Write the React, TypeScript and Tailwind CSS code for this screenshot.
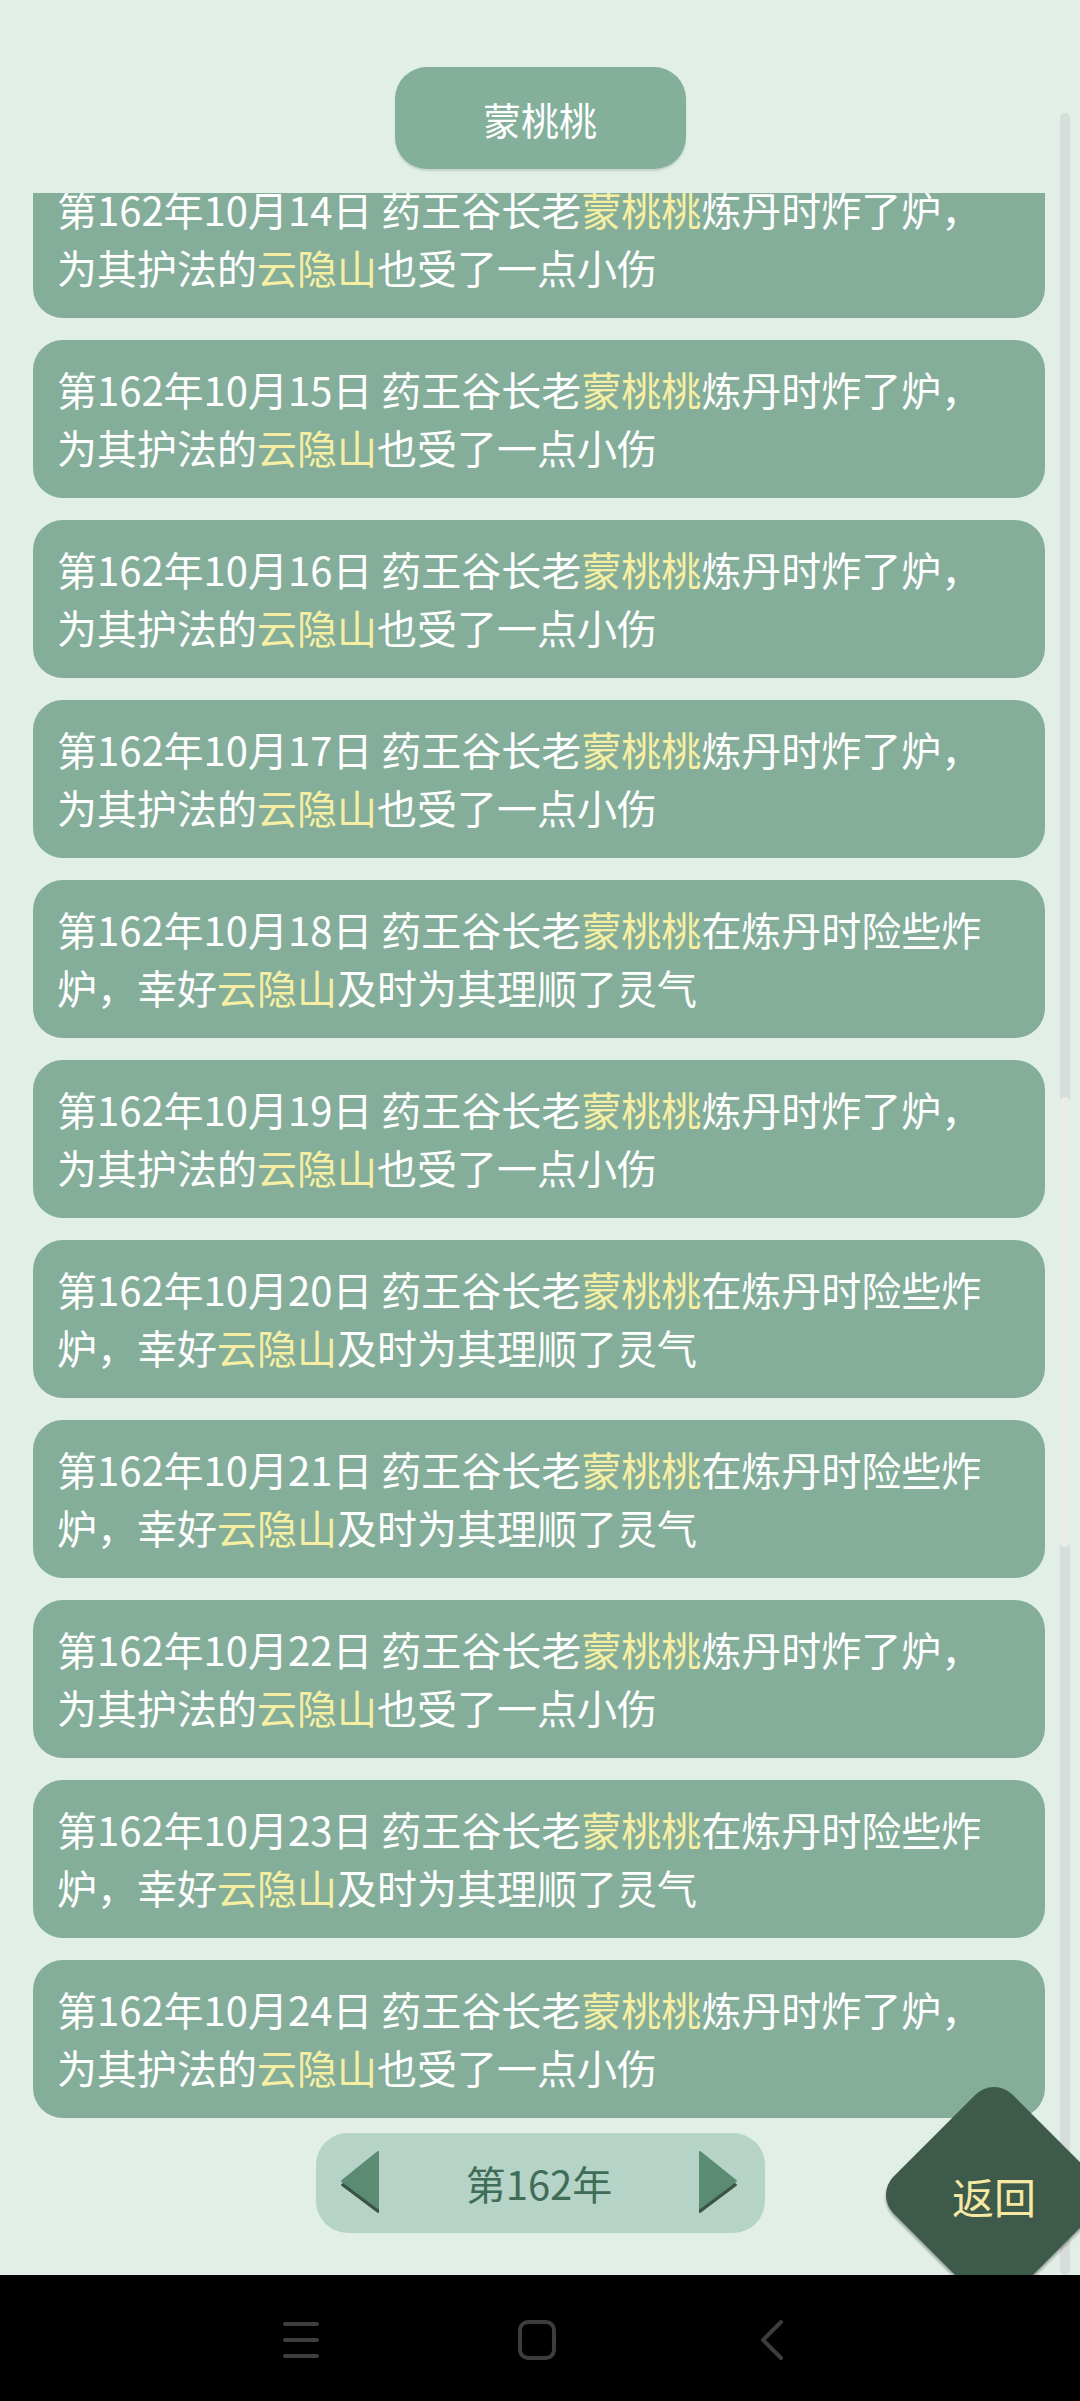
import React from "react";

type Entry = { day: number; kind: "boom" | "close" };

const entries: Entry[] = [
  { day: 14, kind: "boom" },
  { day: 15, kind: "boom" },
  { day: 16, kind: "boom" },
  { day: 17, kind: "boom" },
  { day: 18, kind: "close" },
  { day: 19, kind: "boom" },
  { day: 20, kind: "close" },
  { day: 21, kind: "close" },
  { day: 22, kind: "boom" },
  { day: 23, kind: "close" },
  { day: 24, kind: "boom" },
];

const Hl = ({ children }: { children: React.ReactNode }) => (
  <span className="text-[#f6eea2]">{children}</span>
);

function LogCard({ day, kind }: Entry) {
  return (
    <div className="mx-[33px] w-[1012px] rounded-[30px] bg-[#84ae9a] pl-6 pr-4 pt-5 pb-[22px] text-[40px] leading-[58px] text-white">
      <div className="whitespace-nowrap">
        第162年10月{day}日 药王谷长老<Hl>蒙桃桃</Hl>
        {kind === "boom" ? "炼丹时炸了炉，" : "在炼丹时险些炸"}
      </div>
      <div className="whitespace-nowrap">
        {kind === "boom" ? (
          <>
            为其护法的<Hl>云隐山</Hl>也受了一点小伤
          </>
        ) : (
          <>
            炉，幸好<Hl>云隐山</Hl>及时为其理顺了灵气
          </>
        )}
      </div>
    </div>
  );
}

function Arrow({ dir }: { dir: "left" | "right" }) {
  const pts = dir === "left" ? "2,31 38,2 38,58" : "2,2 2,58 38,31";
  return (
    <svg width="40" height="66" viewBox="0 0 40 66">
      <polygon points={pts} transform="translate(0,4)" fill="#3a5446" strokeLinejoin="round" stroke="#3a5446" strokeWidth="2" />
      <polygon points={pts} fill="#5b8b73" strokeLinejoin="round" stroke="#5b8b73" strokeWidth="2" />
    </svg>
  );
}

export default function App() {
  return (
    <div
      className="relative flex h-[2401px] w-[1080px] flex-col overflow-hidden bg-[#e1efe7]"
      style={{ fontFamily: '"Noto Sans CJK SC", "Noto Sans", sans-serif' }}
    >
      {/* title */}
      <div className="mt-[67px] flex justify-center">
        <div className="flex h-[102px] w-[291px] items-center justify-center rounded-[32px] bg-[#84af9b] text-[38px] text-white shadow-[0_2px_2px_rgba(0,0,0,0.12)]">
          蒙桃桃
        </div>
      </div>

      {/* log list */}
      <div className="mt-[24px] h-[1927px] overflow-hidden">
        <div className="mt-[-33px] flex flex-col gap-[22px]">
          {entries.map((e) => (
            <LogCard key={e.day} {...e} />
          ))}
        </div>
      </div>

      {/* year pager */}
      <div className="mt-[13px] flex justify-center">
        <div className="flex h-[100px] w-[449px] items-center justify-between rounded-[32px] bg-[#b5d3c6] pl-6 pr-[26px]">
          <Arrow dir="left" />
          <span className="text-[40px] text-[#3f6d57]">第162年</span>
          <Arrow dir="right" />
        </div>
      </div>

      <div className="flex-1" />

      {/* system nav bar */}
      <div className="relative z-20 flex h-[126px] items-center bg-black pl-[283px]">
        <svg width="36" height="40" viewBox="0 0 36 40" className="mt-1">
          <g stroke="#3d3d3d" strokeWidth="4" strokeLinecap="round">
            <line x1="2" y1="4" x2="34" y2="4" />
            <line x1="2" y1="20" x2="34" y2="20" />
            <line x1="2" y1="36" x2="34" y2="36" />
          </g>
        </svg>
        <svg width="40" height="42" viewBox="0 0 40 42" className="ml-[198px] mt-1">
          <rect x="3" y="3" width="34" height="36" rx="8" fill="none" stroke="#3d3d3d" strokeWidth="4" />
        </svg>
        <svg width="26" height="42" viewBox="0 0 26 42" className="ml-[202px] mt-1">
          <polyline points="22,3 4,21 22,39" fill="none" stroke="#3d3d3d" strokeWidth="4" strokeLinecap="round" strokeLinejoin="round" />
        </svg>
      </div>

      {/* scrollbar */}
      <div className="absolute left-[1060px] top-[113px] h-[2162px] w-[10px] rounded-full bg-[#d6dddA]">
        <div className="absolute left-0 top-[984px] h-[450px] w-[10px] rounded-full bg-[#e9edea]" />
      </div>

      {/* back button */}
      <div className="absolute left-[910px] top-[2111px] z-10 h-[168px] w-[168px] rotate-45 rounded-[26px] bg-[#3d5a4a] shadow-[2px_2px_3px_rgba(0,0,0,0.35)]" />
      <div className="absolute left-[910px] top-[2111px] z-10 flex h-[168px] w-[168px] items-center justify-center text-[42px] text-[#f5e9a3]">
        返回
      </div>
    </div>
  );
}
